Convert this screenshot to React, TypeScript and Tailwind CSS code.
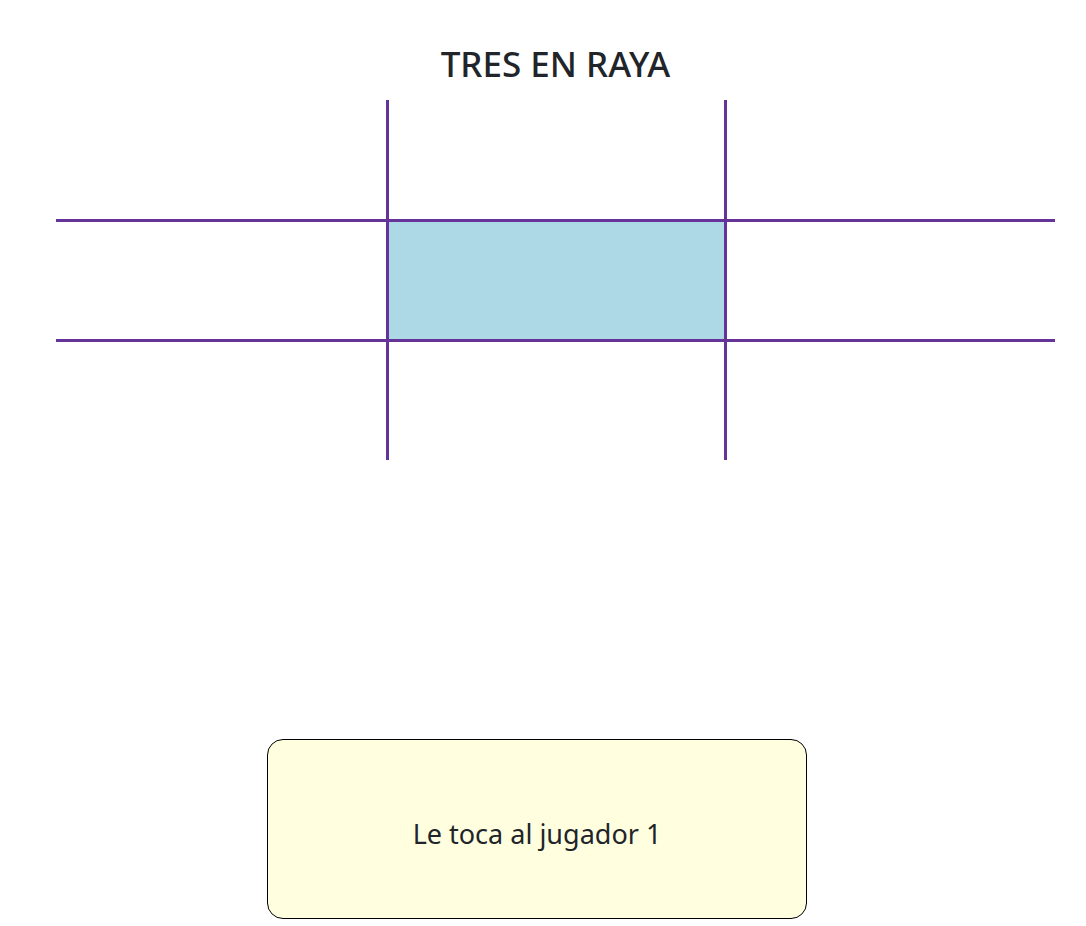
const cells = [0, 1, 2, 3, 4, 5, 6, 7, 8];

export default function App() {
    return (
        <div className="min-h-[926px] bg-white text-[#212529] font-['Noto_Sans','Open_Sans',sans-serif]">
            <div className="pt-[41px] ml-[56px] w-[999px]">
                <h1 className="text-center text-[35px] font-medium leading-[46px]">
                    TRES EN RAYA
                </h1>
            </div>

            <div className="mt-[13px] ml-[56px] w-[999px] grid grid-cols-[333px_338px_328px] grid-rows-[122px_120px_118px]">
                {cells.map((i) => {
                    const row = Math.floor(i / 3);
                    const col = i % 3;
                    return (
                        <div
                            key={i}
                            className={
                                (col < 2 ? "border-r-[3px] " : "") +
                                (row < 2 ? "border-b-[3px] " : "") +
                                "border-[#663399] " +
                                (i === 4 ? "bg-[#add8e6]" : "bg-white")
                            }
                        />
                    );
                })}
            </div>

            <div className="mt-[279px] ml-[267px] w-[540px] h-[180px] rounded-2xl border border-black bg-[#ffffe0] flex items-center justify-center">
                <span className="text-[27px] leading-none mt-[9px]">Le toca al jugador 1</span>
            </div>
        </div>
    );
}
